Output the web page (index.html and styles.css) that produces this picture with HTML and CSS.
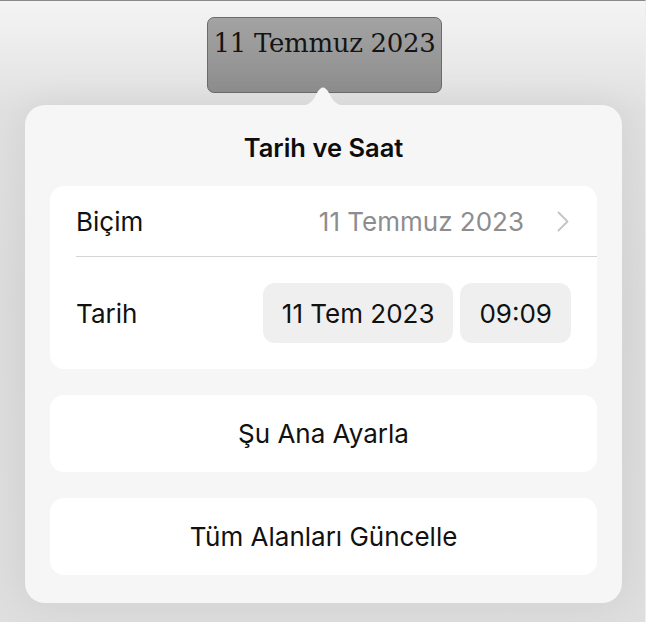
FILE: index.html
```html
<!DOCTYPE html>
<html lang="tr">
<head>
<meta charset="utf-8">
<title>Tarih ve Saat</title>
<link rel="stylesheet" href="styles.css">
</head>
<body>
<div class="frame">
  <div class="textbox">11 Temmuz 2023</div>
  <div class="popover">
    <svg class="arrow" width="48" height="22" viewBox="0 0 48 22" aria-hidden="true">
      <path d="M0 22 C10 22 14 17 18 9 Q24 -2 30 9 C34 17 38 22 48 22 Z" fill="#f6f6f6"/>
    </svg>
    <div class="title">Tarih ve Saat</div>
    <div class="group">
      <div class="row row-format">
        <span class="label">Biçim</span>
        <span class="value">11 Temmuz 2023</span>
        <svg class="chevron" width="12" height="21" viewBox="0 0 12 21" aria-hidden="true">
          <path d="M1.5 1.5 L10.5 10.5 L1.5 19.5" fill="none" stroke="#c4c4c7" stroke-width="1.8" stroke-linecap="round" stroke-linejoin="round"/>
        </svg>
      </div>
      <div class="sep"></div>
      <div class="row row-date">
        <span class="label">Tarih</span>
        <div class="pills">
          <span class="pill">11 Tem 2023</span>
          <span class="pill">09:09</span>
        </div>
      </div>
    </div>
    <div class="button">Şu Ana Ayarla</div>
    <div class="button">Tüm Alanları Güncelle</div>
  </div>
</div>
</body>
</html>
```

FILE: styles.css
```css
html, body {
  margin: 0;
  padding: 0;
}
body {
  width: 646px;
  height: 622px;
  overflow: hidden;
  font-family: "Inter", "Roboto", "Noto Sans", sans-serif;
  color: #111;
}
.frame {
  box-sizing: border-box;
  width: 646px;
  height: 622px;
  border-top: 1px solid #8a8a8a;
  border-right: 1px solid #eeeeee;
  background: linear-gradient(#f4f4f4 0px, #ebebeb 50px, #e0e0e0 110px, #dcdcdc 300px, #dedede 622px);
  padding-top: 16px;
  display: flex;
  flex-direction: column;
}
.textbox {
  box-sizing: border-box;
  align-self: flex-start;
  margin-left: 207px;
  width: 235px;
  height: 76px;
  border: 1px solid #6b6b6b;
  border-radius: 7px;
  background: linear-gradient(#a3a3a3, #8e8e8e);
  font-family: "DejaVu Serif", "Liberation Serif", serif;
  font-size: 26px;
  line-height: 30px;
  padding-top: 10px;
  text-align: center;
  color: #141414;
  letter-spacing: -0.3px;
}
.popover {
  position: relative;
  box-sizing: border-box;
  margin-top: 12px;
  margin-left: 25px;
  width: 597px;
  height: 498px;
  border-radius: 20px;
  background: #f6f6f6;
  box-shadow: 0 0 40px rgba(0, 0, 0, 0.07);
  padding: 0 25px 28px;
  display: flex;
  flex-direction: column;
}
.arrow {
  position: absolute;
  top: -21px;
  left: 274px;
  display: block;
}
.title {
  font-weight: 600;
  font-size: 25.5px;
  line-height: 30px;
  padding: 28px 0 23px;
  text-align: center;
  color: #0d0d0d;
}
.group {
  background: #fff;
  border-radius: 14px;
}
.row {
  display: flex;
  align-items: center;
  padding: 0 26px;
  font-size: 26px;
}
.row-format {
  height: 70px;
  padding-right: 28px;
}
.row-format .label {
  flex: 1;
}
.value {
  color: #8d8d8f;
  margin-right: 33px;
}
.chevron {
  display: block;
}
.sep {
  height: 1px;
  margin-left: 26px;
  background: #d4d4d6;
}
.row-date {
  height: 112px;
  justify-content: space-between;
}
.pills {
  display: flex;
  gap: 7px;
}
.pill {
  height: 60px;
  display: flex;
  align-items: center;
  padding: 0 19px;
  border-radius: 12px;
  background: #efeff0;
}
.button {
  margin-top: 26px;
  height: 77px;
  border-radius: 14px;
  background: #fff;
  display: flex;
  align-items: center;
  justify-content: center;
  font-size: 26px;
}
```
